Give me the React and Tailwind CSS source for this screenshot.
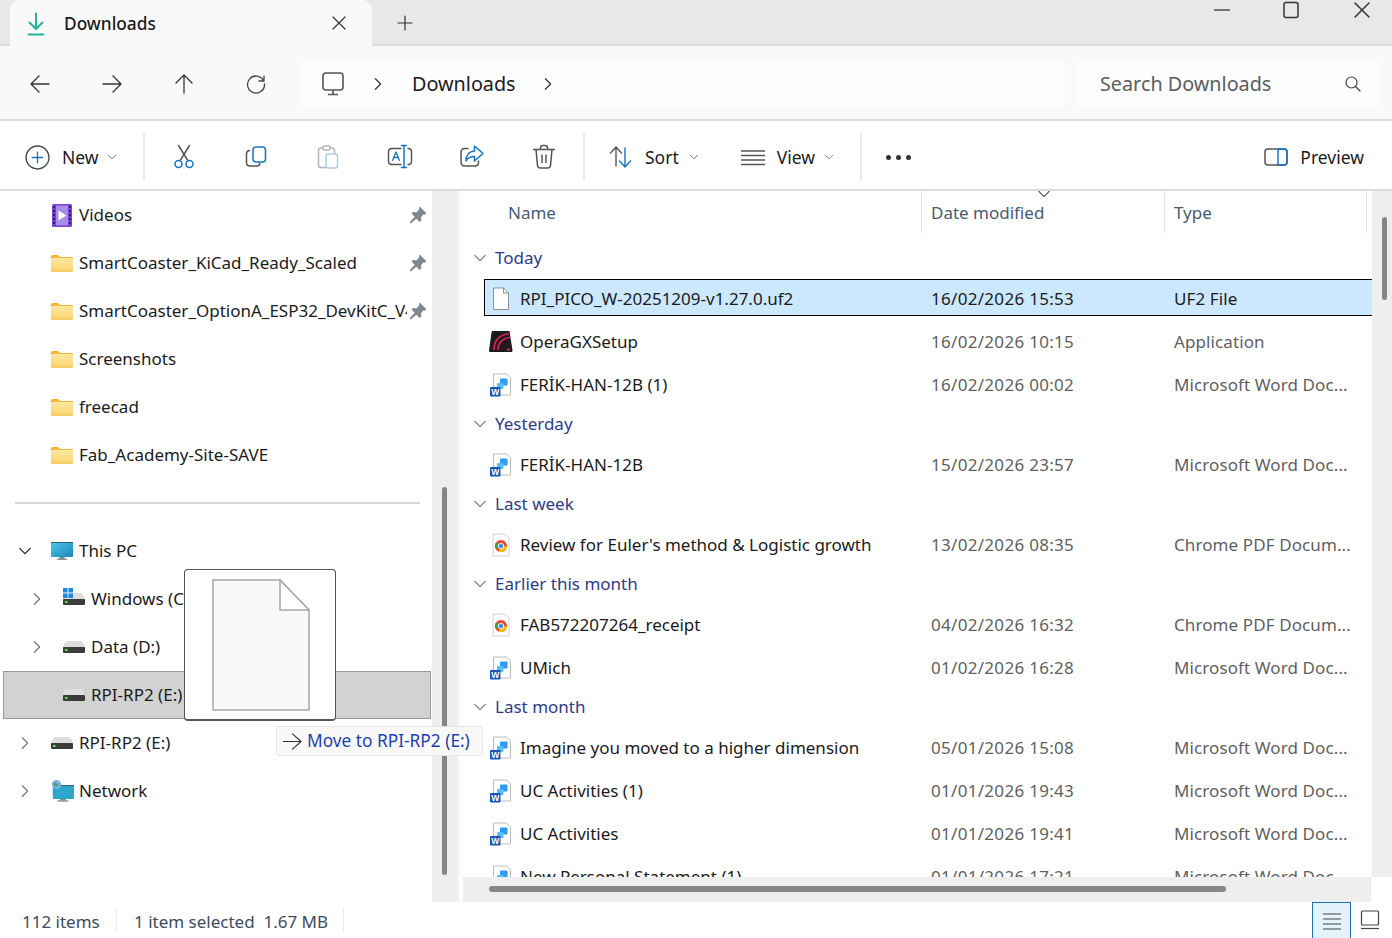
const FONT = "font-['Noto_Sans','Open_Sans',sans-serif]"

const Chevron = ({ dir = 'right', className = '' }) => {
  const paths = { right: 'M5 2l6 6-6 6', down: 'M2 5l6 6 6-6' }
  return (
    <svg viewBox="0 0 16 16" className={className} fill="none" stroke="currentColor" strokeWidth="1.4" strokeLinecap="round" strokeLinejoin="round">
      <path d={paths[dir]} />
    </svg>
  )
}

const Folder = () => (
  <svg viewBox="0 0 24 18" className="w-[24px] h-[18px]">
    <defs>
      <linearGradient id="fold" x1="0" y1="0" x2="0" y2="1">
        <stop offset="0" stopColor="#fde9a4" />
        <stop offset="1" stopColor="#fcd56c" />
      </linearGradient>
    </defs>
    <path d="M1 2.5C1 1.6 1.6 1 2.5 1H8l2.2 2H22c.6 0 1 .4 1 1v2H1z" fill="#f2b92f" />
    <rect x="1" y="4" width="22" height="13.5" rx="1" fill="url(#fold)" />
    <rect x="1" y="16.6" width="22" height="1" fill="#eebc45" />
  </svg>
)

const VideosIcon = () => (
  <svg viewBox="0 0 24 24" className="w-[24px] h-[24px]">
    <rect x="2" y="1" width="20" height="23" rx="1.5" fill="#7c3fd0" />
    <rect x="6" y="2.5" width="12" height="20" fill="#a98be8" />
    <path d="M8.5 7.5l8 5-8 5z" fill="#fff" />
    {[3, 7, 11, 15, 19].map(y => (
      <g key={y}>
        <rect x="3.2" y={y} width="1.8" height="2" fill="#2f1a6b" />
        <rect x="19" y={y} width="1.8" height="2" fill="#2f1a6b" />
      </g>
    ))}
  </svg>
)

const PcIcon = () => (
  <svg viewBox="0 0 24 20" className="w-[24px] h-[20px]">
    <defs>
      <linearGradient id="scr" x1="0" y1="0" x2="1" y2="1">
        <stop offset="0" stopColor="#4fc6e8" />
        <stop offset="1" stopColor="#1a86b8" />
      </linearGradient>
    </defs>
    <rect x="9.5" y="15" width="5" height="3" fill="#7c8790" />
    <rect x="7" y="17.5" width="10" height="1.5" fill="#8a949c" />
    <rect x="1" y="1" width="22" height="15" rx="1" fill="url(#scr)" />
    <rect x="1" y="1" width="22" height="1" fill="#2d5f78" />
  </svg>
)

const NetworkIcon = () => (
  <svg viewBox="0 0 26 26" className="w-[25px] h-[25px]">
    <rect x="11" y="20" width="6" height="3" fill="#7c8790" />
    <rect x="8" y="22.5" width="12" height="1.5" fill="#8a949c" />
    <rect x="3" y="6" width="23" height="15" rx="1" fill="#2ea6cc" />
    <rect x="3" y="6" width="23" height="1" fill="#2d5f78" />
    <circle cx="7" cy="5.5" r="5" fill="#7bb4e0" />
    <path d="M4 3.5c2-1 3 1 4 1s1 2-1 3-3-2-3-4z" fill="#4a9a6a" />
  </svg>
)

const Drive = ({ win }) => (
  <svg viewBox="0 0 24 22" className="w-[24px] h-[22px]">
    <path d="M1 11.500C1.500 8 3 5 6 5h12c3 0 4.500 3 5 6.500z" fill="#dedede" />
    {win && (
      <g fill="#1e88d8">
        <rect x="1" y="0" width="4.500" height="4.500" />
        <rect x="6.500" y="0" width="4.500" height="4.500" />
        <rect x="1" y="5.500" width="4.500" height="4.500" />
        <rect x="6.500" y="5.500" width="4.500" height="4.500" />
      </g>
    )}
    <rect x="1" y="11" width="22" height="6" rx="1" fill="#3b3b3b" />
    <rect x="3" y="13" width="2.500" height="2" fill="#5fe05f" />
  </svg>
)

const WordIcon = () => (
  <svg viewBox="0 0 22 24" className="w-[22px] h-[24px]">
    <path d="M3.500 1h13l4 4v17h-17z" fill="#fff" stroke="#b5b5b5" strokeWidth="0.9" />
    <rect x="10" y="5.500" width="7.500" height="7" rx="1" fill="#2f9bf0" />
    <rect x="7" y="10" width="6.500" height="6" rx="1" fill="#5abcf5" />
    <rect x="0" y="14" width="10.500" height="9.500" rx="1" fill="#1657b8" />
    <text x="5.200" y="21.800" textAnchor="middle" fontSize="8.500" fontWeight="700" fill="#fff" fontFamily="Liberation Sans">W</text>
  </svg>
)

const ChromeDoc = () => (
  <svg viewBox="0 0 22 24" className="w-[22px] h-[24px]">
    <path d="M3 1h12l4 4v18H3z" fill="#fbfbfb" stroke="#cfcfcf" strokeWidth="0.9" />
    <circle cx="11" cy="13" r="6" fill="#ea4335" />
    <path d="M11 13L5.800 16A6 6 0 0 1 6 9.600z" fill="#34a853" />
    <path d="M11 13h6a6 6 0 0 1-8.500 5.400z" fill="#fbbc05" />
    <circle cx="11" cy="13" r="3" fill="#fff" />
    <circle cx="11" cy="13" r="2.200" fill="#4285f4" />
  </svg>
)

const OperaIcon = () => (
  <svg viewBox="0 0 24 24" className="w-[24px] h-[24px]">
    <path d="M4 1h16.500l3 19.500c0 1-.6 1.500-1.500 1.500H1.500C.6 22 0 21.500 0 20.500L2.500 2.500C2.700 1.500 3.200 1 4 1z" fill="#1d1a22" />
    <path d="M5 20C5 11 10 5 20 3.500M9 20C9 13 13.500 8 21 7.500" fill="none" stroke="#e0224a" strokeWidth="1.700" />
    <rect x="18" y="18.500" width="3" height="2" fill="#e0224a" />
  </svg>
)

const BlankDoc = () => (
  <svg viewBox="0 0 20 24" className="w-[20px] h-[24px]">
    <path d="M2.500 1h10l5 5v16.500h-15z" fill="#fff" stroke="#8f8f8f" strokeWidth="1" />
    <path d="M12.500 1v5h5" fill="none" stroke="#8f8f8f" strokeWidth="1" />
  </svg>
)

const Pin = () => (
  <svg viewBox="0 0 16 16" className="w-[18px] h-[18px] ml-[2px]" fill="#7e8a90">
    <path d="M9.500 .5l6 6-1.300 1.200-1.100-.3-2.400 2.400.2 3.200-1.300 1.300-3-3L1.500 15.500.5 14.500l4.600-5-2.900-2.900L3.500 5.300l3.200.2 2.400-2.400-.3-1.200z" />
  </svg>
)

const TB = ({ children, className = 'w-[26px] h-[26px]' }) => (
  <svg viewBox="0 0 26 26" className={className} fill="none" strokeLinecap="round" strokeLinejoin="round" strokeWidth="1.500">
    {children}
  </svg>
)

const ToolIcons = {
  cut: (
    <TB>
      <path d="M7.500 1.500L16.500 16M18.500 1.500L9.500 16" stroke="#555" />
      <circle cx="7.500" cy="20" r="3.500" stroke="#1a73c0" />
      <circle cx="18.500" cy="20" r="3.500" stroke="#1a73c0" />
    </TB>
  ),
  copy: (
    <TB>
      <path d="M6.500 6.500C4.500 6.800 3.500 8 3.500 9.500v9c0 2 1.500 3.500 3.500 3.500h7c1.500 0 2.500-1 3-2.500" stroke="#555" />
      <rect x="10" y="3" width="12.500" height="15" rx="3" stroke="#1a73c0" />
    </TB>
  ),
  paste: (
    <TB>
      <path d="M8 4H6C4.500 4 3.500 5 3.500 6.500V21c0 1.500 1 2.500 2.500 2.500h5" stroke="#b5b5b5" />
      <path d="M15 4h2c1.500 0 2.500 1 2.500 2.500V9" stroke="#b5b5b5" />
      <rect x="8" y="2" width="7" height="4" rx="1" stroke="#b5b5b5" />
      <rect x="11" y="10" width="11.500" height="14" rx="2" stroke="#a9cde8" />
    </TB>
  ),
  rename: (
    <TB>
      <path d="M14 4.500H5C3 4.500 1.500 6 1.500 8v9C1.500 19 3 20.500 5 20.500h9M21 4.500h.5c1.800 0 3 1.500 3 3.500v9c0 2-1.200 3.500-3 3.500H21" stroke="#555" />
      <path d="M5.500 16.500L9 8l3.500 8.500M6.800 13.500h4.500" stroke="#1a73c0" strokeWidth="1.300" />
      <path d="M14.500 1.500h5M14.500 23.500h5M17 1.500v22" stroke="#1a73c0" />
    </TB>
  ),
  share: (
    <TB>
      <path d="M9 4.500H6C3.500 4.500 2 6 2 8.500V18c0 2.500 1.500 4 4 4h10c2.500 0 3.500-1.500 3.500-3.500V17" stroke="#555" />
      <path d="M15.500 2l8.500 7.500-8.500 7.500v-4.500C11 12.500 8.500 14 7 17c0-6 3-9.500 8.500-10z" stroke="#1a73c0" />
    </TB>
  ),
  trash: (
    <TB>
      <path d="M2.500 5.500h21M9.500 5.500V4c0-1.500 1-2.500 2.500-2.500h2c1.500 0 2.500 1 2.500 2.500v1.500" stroke="#555" />
      <path d="M5 5.500l1.500 16c.2 1.700 1.300 2.500 2.800 2.500h7.400c1.500 0 2.600-.8 2.800-2.500l1.500-16M11 11v7.500M15 11v7.500" stroke="#555" />
    </TB>
  ),
}

const SmallChevron = () => <Chevron dir="down" className="w-[10px] h-[10px] text-[#6b6b6b]" />

const Divider = () => <div className="w-[2px] h-[48px] bg-[#ececec]" />

const TitleBar = () => (
  <div className="flex items-start h-[46px] bg-[#e8e8e8] border-b-[2px] border-[#dcdcdc] shrink-0">
    <div className="flex items-center ml-[10px] w-[362px] h-[46px] pt-[1px] bg-[#f9f9f9] rounded-t-[9px] relative">
      <svg viewBox="0 0 24 24" className="w-[24px] h-[24px] ml-[14px]" fill="none" stroke="#29b49a" strokeWidth="2" strokeLinecap="round" strokeLinejoin="round">
        <path d="M12 1.500v15M5.500 10.500l6.500 6.500 6.500-6.500M4.500 22.500h15" />
      </svg>
      <span className="ml-[16px] text-[17.300px] font-medium text-[#1b1b1b]">Downloads</span>
      <svg viewBox="0 0 16 16" className="w-[16px] h-[16px] absolute left-[321px] top-[15px]" fill="none" stroke="#333" strokeWidth="1.200" strokeLinecap="round">
        <path d="M2 2l12 12M14 2L2 14" />
      </svg>
    </div>
    <svg viewBox="0 0 16 16" className="w-[16px] h-[16px] ml-[25px] mt-[15px]" fill="none" stroke="#333" strokeWidth="1.200" strokeLinecap="round">
      <path d="M8 1v14M1 8h14" />
    </svg>
    <div className="flex-1" />
    <svg viewBox="0 0 16 16" className="w-[16px] h-[16px] mt-[2px]" fill="none" stroke="#333" strokeWidth="1.300">
      <path d="M0 8h16" />
    </svg>
    <svg viewBox="0 0 16 18" className="w-[16px] h-[18px] ml-[53px] mt-[1px]" fill="none" stroke="#333" strokeWidth="1.500">
      <rect x="1" y="1.500" width="14" height="15" rx="2" />
    </svg>
    <svg viewBox="0 0 18 18" className="w-[18px] h-[18px] ml-[54px] mr-[21px] mt-[1px]" fill="none" stroke="#333" strokeWidth="1.500" strokeLinecap="round">
      <path d="M2 2l14 14M16 2L2 16" />
    </svg>
  </div>
)

const AddressBar = () => (
  <div className="flex items-center h-[75px] pt-[3px] bg-[#f9f9f9] border-b-[2px] border-[#dcdcdc] shrink-0 text-[#1b1b1b]">
    <div className="flex items-center w-[301px] pl-[30px] gap-[52px]">
      <svg viewBox="0 0 20 20" className="w-[20px] h-[20px]" fill="none" stroke="#333" strokeWidth="1.300" strokeLinecap="round" strokeLinejoin="round"><path d="M19 10H1M9 2l-8 8 8 8" /></svg>
      <svg viewBox="0 0 20 20" className="w-[20px] h-[20px]" fill="none" stroke="#333" strokeWidth="1.300" strokeLinecap="round" strokeLinejoin="round"><path d="M1 10h18M11 2l8 8-8 8" /></svg>
      <svg viewBox="0 0 20 20" className="w-[20px] h-[20px]" fill="none" stroke="#333" strokeWidth="1.300" strokeLinecap="round" strokeLinejoin="round"><path d="M10 19V1M2 9l8-8 8 8" /></svg>
      <svg viewBox="0 0 20 20" className="w-[20px] h-[20px]" fill="none" stroke="#444" strokeWidth="1.300" strokeLinecap="round" strokeLinejoin="round"><path d="M17.500 6.500A8.500 8.500 0 1 0 18.500 10M18 2v5h-5" /></svg>
    </div>
    <div className="flex items-center w-[764px] h-[48px] bg-[#fdfdfd] rounded-[6px] pl-[21px]">
      <svg viewBox="0 0 22 24" className="w-[22px] h-[24px]" fill="none" stroke="#555" strokeWidth="1.600" strokeLinejoin="round">
        <rect x="1" y="1" width="20" height="17" rx="3" />
        <path d="M11 18v4M6 22.500h10" />
      </svg>
      <Chevron className="w-[14px] h-[14px] ml-[27px] text-[#333]" />
      <span className="ml-[27px] text-[19.800px]">Downloads</span>
      <Chevron className="w-[14px] h-[14px] ml-[25px] text-[#333]" />
    </div>
    <div className="flex items-center justify-between w-[303px] h-[48px] ml-[12px] bg-[#fdfdfd] rounded-[6px] pl-[23px] pr-[19px]">
      <span className="text-[19.800px] text-[#5c5c5c]">Search Downloads</span>
      <svg viewBox="0 0 16 16" className="w-[16px] h-[16px]" fill="none" stroke="#444" strokeWidth="1.200" strokeLinecap="round">
        <circle cx="6.500" cy="6.500" r="5.500" />
        <path d="M10.500 10.500L15 15" />
      </svg>
    </div>
  </div>
)

const Toolbar = () => (
  <div className="flex items-center h-[70px] pt-[4px] bg-white border-b-[2px] border-[#dcdcdc] shrink-0 text-[17.500px] text-[#1b1b1b]">
    <div className="flex items-center w-[143px] pl-[25px]">
      <svg viewBox="0 0 24 24" className="w-[25px] h-[25px]" fill="none" strokeWidth="1.300" strokeLinecap="round">
        <circle cx="12" cy="12" r="11" stroke="#444" />
        <path d="M12 7v10M7 12h10" stroke="#1a73c0" />
      </svg>
      <span className="ml-[12px]">New</span>
      <span className="ml-[8px]"><SmallChevron /></span>
    </div>
    <Divider />
    <div className="flex items-center pl-[3px]">
      {['cut', 'copy', 'paste', 'rename', 'share', 'trash'].map(k => (
        <div key={k} className="w-[72px] flex justify-center">{ToolIcons[k]}</div>
      ))}
    </div>
    <div className="ml-[3px]"><Divider /></div>
    <div className="flex items-center w-[275px] pl-[24px]">
      <svg viewBox="0 0 24 24" className="w-[24px] h-[24px]" fill="none" strokeWidth="1.400" strokeLinecap="round" strokeLinejoin="round">
        <path d="M7 21V2M1.500 8L7 2l5.500 6" stroke="#555" />
        <path d="M16 3v19M10.500 16l5.500 6 5.500-6" stroke="#1a73c0" />
      </svg>
      <span className="ml-[12px]">Sort</span>
      <span className="ml-[10px]"><SmallChevron /></span>
      <svg viewBox="0 0 24 24" className="w-[24px] h-[24px] ml-[42px]" fill="none" stroke="#555" strokeWidth="1.300">
        <path d="M0 6h24M0 10.500h24M0 15h24M0 19.500h24" />
      </svg>
      <span className="ml-[12px]">View</span>
      <span className="ml-[9px]"><SmallChevron /></span>
    </div>
    <Divider />
    <div className="flex items-center gap-[5px] ml-[24px]">
      <span className="w-[5px] h-[5px] rounded-full bg-[#333]" />
      <span className="w-[5px] h-[5px] rounded-full bg-[#333]" />
      <span className="w-[5px] h-[5px] rounded-full bg-[#333]" />
    </div>
    <div className="flex-1" />
    <svg viewBox="0 0 24 18" className="w-[24px] h-[18px]" fill="none" strokeWidth="1.500">
      <rect x="1" y="1" width="22" height="16" rx="3" stroke="#555" />
      <path d="M14 1h6c2 0 3 1 3 3v10c0 2-1 3-3 3h-6z" stroke="#1a73c0" />
    </svg>
    <span className="ml-[12px] mr-[28px]">Preview</span>
  </div>
)

const sideRows = [
  { label: 'Videos', icon: <VideosIcon />, pin: true },
  { label: 'SmartCoaster_KiCad_Ready_Scaled', icon: <Folder />, pin: true },
  { label: 'SmartCoaster_OptionA_ESP32_DevKitC_V4', icon: <Folder />, pin: true },
  { label: 'Screenshots', icon: <Folder /> },
  { label: 'freecad', icon: <Folder /> },
  { label: 'Fab_Academy-Site-SAVE', icon: <Folder /> },
  { rule: true },
  { label: 'This PC', icon: <PcIcon />, chevron: 'down' },
  { label: 'Windows (C:)', icon: <Drive win />, chevron: 'right', indent: true },
  { label: 'Data (D:)', icon: <Drive />, chevron: 'right', indent: true },
  { label: 'RPI-RP2 (E:)', icon: <Drive />, indent: true, selected: true },
  { label: 'RPI-RP2 (E:)', icon: <Drive />, chevron: 'right' },
  { label: 'Network', icon: <NetworkIcon />, chevron: 'right' },
]

const SideRow = ({ row }) => {
  if (row.rule) {
    return (
      <div className="flex items-center h-[48px] pl-[15px]">
        <div className="w-[405px] h-[2px] bg-[#d8d8d8]" />
      </div>
    )
  }
  const pad = row.indent ? 'pl-[12px]' : 'pl-0'
  const look = row.selected ? 'bg-[#d2d2d2] border border-[#999] ml-[3px] w-[428px]' : 'w-[432px]'
  return (
    <div className={`flex items-center h-[48px] ${look}`}>
      <div className={`flex items-center ${pad} ${row.selected ? '-ml-[4px]' : ''}`}>
        <div className="flex justify-center items-center w-[50px]">
          {row.chevron && <Chevron dir={row.chevron} className={`w-[14px] h-[14px] ${row.chevron === 'down' ? 'text-[#222]' : 'text-[#777]'}`} />}
        </div>
        <div className="flex justify-center items-center w-[24px]">{row.icon}</div>
      </div>
      <span className="ml-[5px] w-[328px] overflow-hidden whitespace-nowrap text-[17px] text-[#1b1b1b]">{row.label}</span>
      {row.pin && <Pin />}
    </div>
  )
}

const Sidebar = () => (
  <div className="flex shrink-0 w-[459px] overflow-hidden">
    <div className="w-[432px] overflow-hidden bg-white">
      {sideRows.map((row, i) => <SideRow key={i} row={row} />)}
    </div>
    <div className="w-[25px] bg-[#eeeeee]">
      <div className="mt-[296px] ml-[10px] w-[5px] h-[388px] rounded-full bg-[#868686]" />
    </div>
    <div className="w-[2px] bg-[#f3f3f3]" />
  </div>
)

const word = 'Microsoft Word Doc...'
const chromeType = 'Chrome PDF Docum...'

const groups = [
  { title: 'Today', files: [
    { name: 'RPI_PICO_W-20251209-v1.27.0.uf2', date: '16/02/2026 15:53', type: 'UF2 File', icon: <BlankDoc />, selected: true },
    { name: 'OperaGXSetup', date: '16/02/2026 10:15', type: 'Application', icon: <OperaIcon /> },
    { name: 'FERİK-HAN-12B (1)', date: '16/02/2026 00:02', type: word, icon: <WordIcon /> },
  ] },
  { title: 'Yesterday', files: [
    { name: 'FERİK-HAN-12B', date: '15/02/2026 23:57', type: word, icon: <WordIcon /> },
  ] },
  { title: 'Last week', files: [
    { name: "Review for Euler's method & Logistic growth", date: '13/02/2026 08:35', type: chromeType, icon: <ChromeDoc /> },
  ] },
  { title: 'Earlier this month', files: [
    { name: 'FAB572207264_receipt', date: '04/02/2026 16:32', type: chromeType, icon: <ChromeDoc /> },
    { name: 'UMich', date: '01/02/2026 16:28', type: word, icon: <WordIcon /> },
  ] },
  { title: 'Last month', files: [
    { name: 'Imagine you moved to a higher dimension', date: '05/01/2026 15:08', type: word, icon: <WordIcon /> },
    { name: 'UC Activities (1)', date: '01/01/2026 19:43', type: word, icon: <WordIcon /> },
    { name: 'UC Activities', date: '01/01/2026 19:41', type: word, icon: <WordIcon /> },
    { name: 'New Personal Statement (1)', date: '01/01/2026 17:21', type: word, icon: <WordIcon /> },
  ] },
]

const FileCells = ({ file }) => (
  <>
    <div className="flex justify-center items-center w-[24px] shrink-0">{file.icon}</div>
    <span className="ml-[7px] w-[411px] shrink-0 whitespace-nowrap text-[#1b1b1b]">{file.name}</span>
    <span className={`w-[243px] shrink-0 whitespace-nowrap tracking-[0.3px] ${file.selected ? 'text-[#1b1b1b]' : 'text-[#5f5f5f]'}`}>{file.date}</span>
    <span className={`whitespace-nowrap tracking-[0.1px] ${file.selected ? 'text-[#1b1b1b]' : 'text-[#5f5f5f]'}`}>{file.type}</span>
  </>
)

const FileRow = ({ file }) => {
  if (file.selected) {
    return (
      <div className="h-[43px] pt-[1px]">
        <div className="flex items-center h-[37px] pt-[3px] pl-[4px] bg-[#cce8ff] border border-r-0 border-black text-[17px]">
          <FileCells file={file} />
        </div>
      </div>
    )
  }
  return (
    <div className="flex items-center h-[43px] pb-[2px] pl-[5px] text-[17px]">
      <FileCells file={file} />
    </div>
  )
}

const FileList = () => (
  <div className="flex flex-col flex-1 min-w-0 overflow-hidden">
    <div className="flex flex-1 min-h-0">
      <div className="flex-1 min-w-0 overflow-hidden bg-white">
        <div className="flex h-[42px] mb-[8px] text-[17px] text-[#4a5b70]">
          <div className="w-[462px] pl-[49px] pt-[1px] flex items-center">Name</div>
          <div className="relative w-[243px] pl-[9px] pt-[1px] flex items-center border-l border-[#e5e5e5]">
            Date modified
            <Chevron dir="down" className="absolute left-[115px] top-[-4px] w-[14px] h-[14px] text-[#555]" />
          </div>
          <div className="w-[203px] pl-[9px] pt-[1px] flex items-center border-x border-[#e5e5e5]">Type</div>
        </div>
        {groups.map(g => (
          <div key={g.title}>
            <div className="flex items-center h-[37px] pb-[3px] pl-[14px] text-[17px] text-[#2e3b86]">
              <Chevron dir="down" className="w-[14px] h-[14px] text-[#777]" />
              <span className="ml-[8px]">{g.title}</span>
            </div>
            <div className="ml-[25px]">
              {g.files.map(f => <FileRow key={f.name} file={f} />)}
            </div>
          </div>
        ))}
      </div>
      <div className="w-[20px] shrink-0 bg-[#eeeeee]">
        <div className="mt-[26px] ml-[10px] w-[5px] h-[83px] rounded-full bg-[#868686]" />
      </div>
    </div>
    <div className="shrink-0 h-[25px] ml-[4px] mr-[21px] pt-[9px] pl-[26px] bg-[#eeeeee]">
      <div className="w-[737px] h-[6px] rounded-full bg-[#868686]" />
    </div>
  </div>
)

const StatusBar = () => (
  <div className="flex items-stretch h-[36px] bg-white shrink-0 text-[17px] text-[#3d4c60]">
    <div className="flex items-center pl-[22px] pt-[4px] w-[116px]">112 items</div>
    <div className="w-[1px] my-[5px] bg-[#ececec]" />
    <div className="flex items-center pl-[17px] pt-[4px] w-[226px] whitespace-pre">1 item selected  1.67 MB</div>
    <div className="w-[1px] my-[5px] bg-[#ececec]" />
    <div className="flex-1" />
    <div className="flex items-center justify-center w-[39px] bg-[#e3f2fb] border border-b-0 border-[#1d72ad]">
      <svg viewBox="0 0 20 20" className="w-[20px] h-[20px]" fill="none" stroke="#444" strokeWidth="1.200">
        <path d="M1 3h18M1 8h18M1 13h18M1 18h18" />
      </svg>
    </div>
    <div className="flex items-center justify-center ml-[9px] mr-[12px] w-[20px]">
      <svg viewBox="0 0 20 20" className="w-[20px] h-[20px]" fill="none" stroke="#444" strokeWidth="1.200">
        <rect x="1.500" y="1" width="17" height="14" rx="1" />
        <path d="M1 18.500h18" />
      </svg>
    </div>
  </div>
)

const DragGhost = () => (
  <div className="absolute left-[184px] top-[569px] w-[152px] h-[152px] flex items-center justify-center pl-[2px] bg-white border border-b-2 border-[#555] rounded-[4px]">
    <svg viewBox="0 0 98 132" className="w-[98px] h-[132px]">
      <path d="M1 1h67l29 30v100H1z" fill="#f9f9f9" stroke="#a6a6a6" strokeWidth="1.500" />
      <path d="M68 1v30h29z" fill="#fff" stroke="#a6a6a6" strokeWidth="1.500" strokeLinejoin="round" />
    </svg>
  </div>
)

const DragTip = () => (
  <div className="absolute left-[276px] top-[726px] w-[207px] h-[30px] flex items-center pl-[6px] bg-[#f9f9f9] border border-[#e5e5e5] rounded-[3px] text-[17.300px] text-[#1f3fae] whitespace-nowrap">
    <svg viewBox="0 0 20 20" className="w-[19px] h-[19px] shrink-0" fill="none" stroke="#333" strokeWidth="1.200" strokeLinecap="round" strokeLinejoin="round">
      <path d="M0 10h19M10 2l9 8-9 8" />
    </svg>
    <span className="ml-[5px]">Move to RPI-RP2 (E:)</span>
  </div>
)

export default function App() {
  return (
    <div className={`relative flex flex-col w-[1392px] h-[938px] overflow-hidden bg-white ${FONT}`}>
      <TitleBar />
      <AddressBar />
      <Toolbar />
      <div className="flex flex-1 min-h-0">
        <Sidebar />
        <FileList />
      </div>
      <StatusBar />
      <DragGhost />
      <DragTip />
    </div>
  )
}
